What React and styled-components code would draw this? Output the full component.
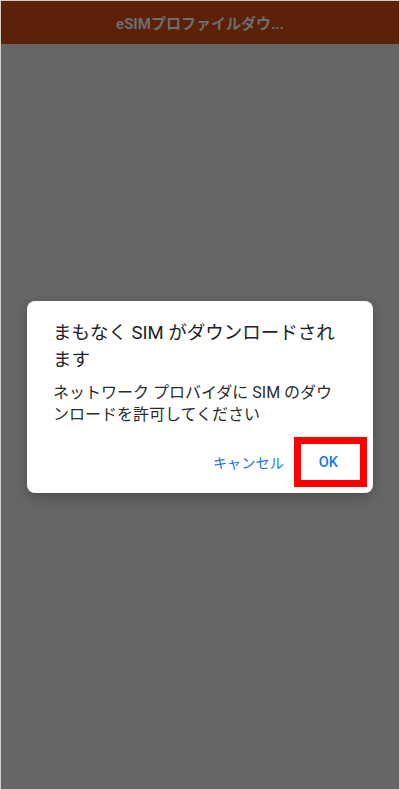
import React from "react";
import styled, { createGlobalStyle } from "styled-components";

const Global = createGlobalStyle`
  html, body { margin: 0; padding: 0; background: #666666; }
  * { box-sizing: border-box; }
`;

const Frame = styled.div`
  width: 400px;
  height: 790px;
  border: 1px solid #d8ccc6;
  display: flex;
  flex-direction: column;
  background: #666666;
  font-family: Roboto, "Noto Sans CJK JP", sans-serif;
  overflow: hidden;
`;

const TopBar = styled.header`
  height: 43px;
  flex: none;
  background: #5c2109;
  display: flex;
  align-items: center;
  justify-content: center;
  color: #6e6e6e;
  font-size: 15px;
  font-weight: 700;
`;

const Scrim = styled.main`
  flex: 1;
  display: flex;
  align-items: center;
  justify-content: center;
  padding-bottom: 39px;
`;

const Dialog = styled.section`
  width: 346px;
  background: #ffffff;
  border-radius: 8px;
  padding: 19px 23px 13px 26px;
  box-shadow: 0 4px 14px rgba(0, 0, 0, 0.25);
`;

const Title = styled.h2`
  margin: 0;
  width: 290px;
  font-size: 18.5px;
  line-height: 27px;
  font-weight: 400;
  color: #202124;
`;

const Message = styled.p`
  margin: 7.5px 0 0;
  width: 288px;
  font-size: 16px;
  line-height: 22.5px;
  color: #2b2b2b;
`;

const Actions = styled.div`
  margin-top: 17.5px;
  display: flex;
  justify-content: flex-end;
  gap: 11px;
`;

const TextButton = styled.button`
  position: relative;
  height: 36px;
  padding: 0 12px;
  border: none;
  background: transparent;
  font-family: Roboto, "Noto Sans CJK JP", sans-serif;
  font-size: ${(p) => (p.$latin ? "14.5px" : "14.2px")};
  font-weight: ${(p) => (p.$latin ? 500 : 400)};
  color: #1a73e8;
  cursor: pointer;
`;

const Highlight = styled.span`
  position: absolute;
  left: -13px;
  right: -17px;
  top: -7px;
  bottom: -7px;
  border: 7px solid #ff0000;
  pointer-events: none;
`;

export default function App() {
  return (
    <>
      <Global />
      <Frame>
        <TopBar>eSIMプロファイルダウ...</TopBar>
        <Scrim>
          <Dialog>
            <Title>まもなく SIM がダウンロードされます</Title>
            <Message>ネットワーク プロバイダに SIM のダウンロードを許可してください</Message>
            <Actions>
              <TextButton>キャンセル</TextButton>
              <TextButton $latin>
                OK
                <Highlight />
              </TextButton>
            </Actions>
          </Dialog>
        </Scrim>
      </Frame>
    </>
  );
}
